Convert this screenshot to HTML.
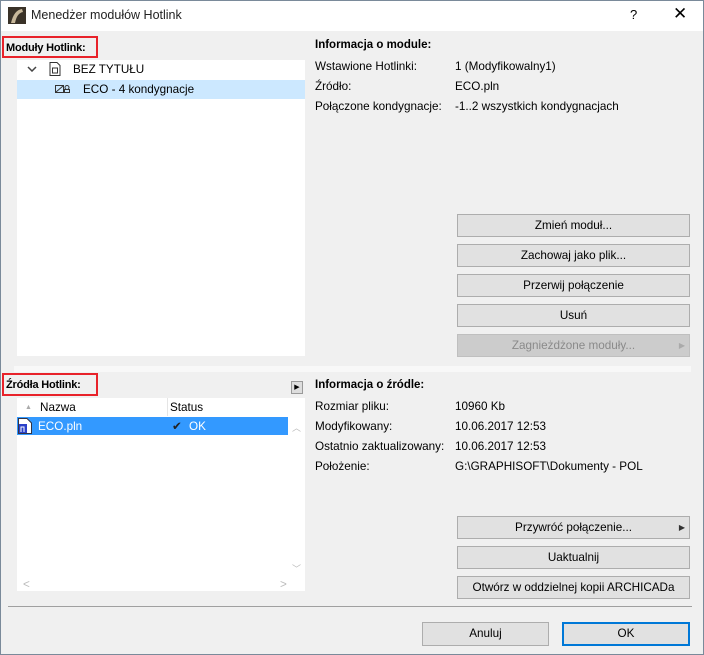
<!DOCTYPE html>
<html><head><meta charset="utf-8"><style>
*{margin:0;padding:0;box-sizing:border-box}
body{width:704px;height:655px;overflow:hidden;background:#f0f0f0;font-family:"Liberation Sans","DejaVu Sans",sans-serif;font-size:11.7px;color:#000;position:relative}
.a{position:absolute;white-space:nowrap}
.win{position:absolute;left:0;top:0;width:704px;height:655px;border:1px solid #7a8a9a}
.btn{position:absolute;left:457px;width:233px;height:23px;background:#e1e1e1;border:1px solid #adadad;text-align:center;line-height:22px}
.red{position:absolute;border:2px solid #e8222a;font-weight:bold;padding:3px 2px;line-height:14px;font-size:11px;white-space:nowrap;overflow:hidden;letter-spacing:-0.2px}
.lbl{left:315px}.val{left:455px}
</style></head><body>
<div class="win"></div>
<div class="a" style="left:1px;top:1px;width:702px;height:30px;background:#fff"></div>
<svg class="a" style="left:8px;top:7px" width="18" height="17"><rect width="18" height="17" fill="#3a3228"/><path d="M3 16 Q6 3 14 2 L15 5 Q9 6 7 16Z" fill="#c8b89a"/></svg>
<div class="a" style="left:31px;top:8px;font-size:12.5px;color:#222">Menedżer modułów Hotlink</div>
<div class="a" style="left:630px;top:7px;font-size:13px">?</div>
<div class="a" style="left:673px;top:4px;font-size:17px;font-weight:300">✕</div>

<div class="red" style="left:2px;top:36px;width:96px;height:22px">Moduły Hotlink:</div>
<div class="a" style="left:17px;top:60px;width:288px;height:296px;background:#fff"></div>
<svg class="a" style="left:27px;top:66px" width="10" height="6"><path d="M1 1L5 5L9 1" fill="none" stroke="#444" stroke-width="1.5"/></svg>
<svg class="a" style="left:49px;top:62px" width="12" height="14"><path d="M1 .5H8L11 3.5V13.5H1Z" fill="none" stroke="#333"/><rect x="3.5" y="6" width="5" height="5" fill="none" stroke="#333"/></svg>
<div class="a" style="left:73px;top:63px">BEZ TYTUŁU</div>
<div class="a" style="left:17px;top:80px;width:288px;height:19px;background:#cce8ff"></div>
<svg class="a" style="left:55px;top:84px" width="16" height="10"><rect x=".5" y="1.5" width="8" height="7" fill="none" stroke="#333"/><path d="M1 8L8 2" stroke="#333"/><circle cx="12" cy="3.5" r="2" fill="none" stroke="#333"/><rect x="9.5" y="5.5" width="5" height="3" fill="none" stroke="#333"/></svg>
<div class="a" style="left:83px;top:83px">ECO - 4 kondygnacje</div>

<div class="a lbl" style="top:39px;font-weight:bold;font-size:11.5px">Informacja o module:</div>
<div class="a lbl" style="top:60px">Wstawione Hotlinki:</div><div class="a val" style="top:60px">1 (Modyfikowalny1)</div>
<div class="a lbl" style="top:80px">Źródło:</div><div class="a val" style="top:80px">ECO.pln</div>
<div class="a lbl" style="top:100px">Połączone kondygnacje:</div><div class="a val" style="top:100px">-1..2 wszystkich kondygnacjach</div>

<div class="btn" style="top:214px">Zmień moduł...</div>
<div class="btn" style="top:244px">Zachowaj jako plik...</div>
<div class="btn" style="top:274px">Przerwij połączenie</div>
<div class="btn" style="top:304px">Usuń</div>
<div class="btn" style="top:334px;background:#ccc;border-color:#bfbfbf;color:#8a8a8a">Zagnieżdżone moduły...<span style="position:absolute;right:4px;font-size:8px;color:#aaa">▶</span></div>

<div class="a" style="left:14px;top:366px;width:677px;height:6px;background:#f8f8f8"></div>

<div class="red" style="left:2px;top:373px;width:96px;height:23px">Źródła Hotlink:</div>
<div class="a" style="left:291px;top:381px;width:12px;height:13px;background:#ddd;border:1px solid #999;font-size:7px;text-align:center;line-height:11px">▶</div>
<div class="a" style="left:17px;top:398px;width:288px;height:193px;background:#fff"></div>
<div class="a" style="left:25px;top:404px;font-size:7px;color:#aaa">▲</div>
<div class="a" style="left:40px;top:401px">Nazwa</div>
<div class="a" style="left:167px;top:398px;width:1px;height:18px;background:#e5e5e5"></div>
<div class="a" style="left:170px;top:401px">Status</div>
<div class="a" style="left:17px;top:417px;width:271px;height:18px;background:#3399ff"></div>
<svg class="a" style="left:18px;top:418px" width="14" height="16"><path d="M.5 .5H9L13.5 5V15.5H.5Z" fill="#fff" stroke="#334"/><rect x="1" y="6" width="8" height="9" fill="#2a40c8"/><path d="M3 14V9H6V14" stroke="#fff" fill="none"/></svg>
<div class="a" style="left:38px;top:420px;color:#fff">ECO.pln</div>
<div class="a" style="left:172px;top:419px;color:#222">✔</div>
<div class="a" style="left:189px;top:420px;color:#fff">OK</div>
<div class="a" style="left:292px;top:421px;font-size:9px;color:#bbb">︿</div>
<div class="a" style="left:292px;top:562px;font-size:9px;color:#bbb">﹀</div>
<div class="a" style="left:23px;top:578px;color:#bbb">&lt;</div>
<div class="a" style="left:280px;top:578px;color:#bbb">&gt;</div>

<div class="a lbl" style="top:379px;font-weight:bold;font-size:11.5px">Informacja o źródle:</div>
<div class="a lbl" style="top:400px">Rozmiar pliku:</div><div class="a val" style="top:400px">10960 Kb</div>
<div class="a lbl" style="top:420px">Modyfikowany:</div><div class="a val" style="top:420px">10.06.2017 12:53</div>
<div class="a lbl" style="top:440px">Ostatnio zaktualizowany:</div><div class="a val" style="top:440px">10.06.2017 12:53</div>
<div class="a lbl" style="top:460px">Położenie:</div><div class="a val" style="top:460px">G:\GRAPHISOFT\Dokumenty - POL</div>

<div class="btn" style="top:516px">Przywróć połączenie...<span style="position:absolute;right:4px;font-size:8px;color:#333">▶</span></div>
<div class="btn" style="top:546px">Uaktualnij</div>
<div class="btn" style="top:576px">Otwórz w oddzielnej kopii ARCHICADa</div>

<div class="a" style="left:8px;top:606px;width:684px;height:1px;background:#a0a0a0"></div>
<div class="btn" style="left:422px;top:622px;width:127px;height:24px;line-height:22px">Anuluj</div>
<div class="btn" style="left:562px;top:622px;width:128px;height:24px;border:2px solid #0078d7;line-height:20px">OK</div>
</body></html>
